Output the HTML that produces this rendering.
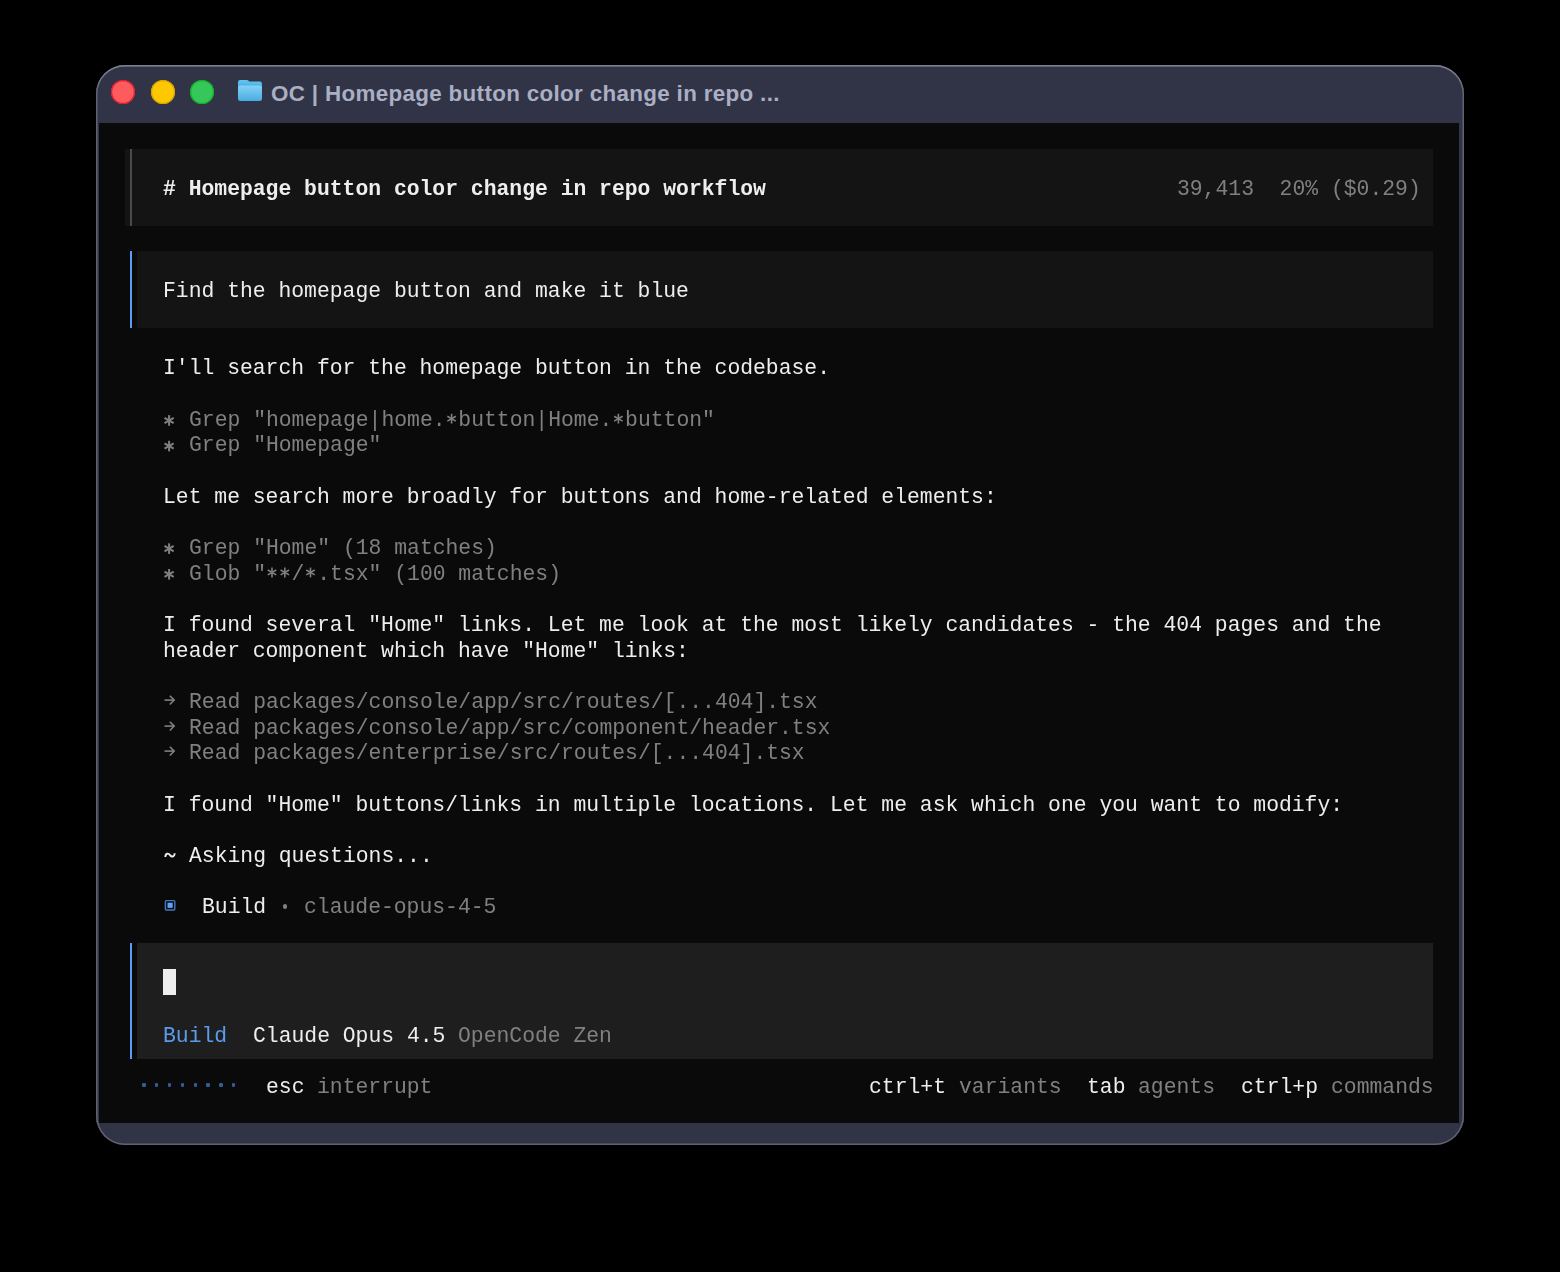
<!DOCTYPE html>
<html><head><meta charset="utf-8">
<style>
html,body{margin:0;padding:0;background:#000;width:1560px;height:1272px;overflow:hidden;}
.a{position:absolute;}
.win{position:absolute;left:96px;top:65px;width:1368px;height:1080px;background:#313447;border-radius:29px;box-shadow:inset 0 1.5px 0 #7a7d8a,inset 0 0 0 1.5px #5f6273;}
.content{position:absolute;left:99px;top:123px;width:1360px;height:1000px;background:#0a0a0a;}
.t{position:absolute;font-family:"Liberation Mono",monospace;font-size:21.38px;line-height:25.64px;height:25.64px;white-space:pre;will-change:transform;}
.title{position:absolute;left:271px;top:78px;font-family:"Liberation Sans",sans-serif;font-weight:bold;font-size:22.4px;letter-spacing:0.33px;line-height:32px;color:#abafc3;white-space:pre;}
.dot{position:absolute;width:24px;height:24px;border-radius:50%;}
svg{position:absolute;overflow:visible;}
</style></head><body>

<div class="win"></div>
<div class="dot" style="left:111px;top:80.3px;background:#fd5b5e;box-shadow:inset 0 0 0 1.2px #e3182f;"></div>
<div class="dot" style="left:150.5px;top:80.3px;background:#fdc800;box-shadow:inset 0 0 0 1.2px #dca300;"></div>
<div class="dot" style="left:190px;top:80.3px;background:#35c759;box-shadow:inset 0 0 0 1.2px #12b026;"></div>
<svg style="left:237px;top:79px" width="26" height="23" viewBox="0 0 26 23">
<defs><linearGradient id="fb" x1="0" y1="0" x2="0" y2="1"><stop offset="0" stop-color="#66c6f4"/><stop offset="1" stop-color="#349fd8"/></linearGradient>
<linearGradient id="ff" x1="0" y1="0" x2="0" y2="1"><stop offset="0" stop-color="#84d2f8"/><stop offset="1" stop-color="#4aabe0"/></linearGradient></defs>
<path d="M1 3.2 Q1 1 3.2 1 L9.8 1 Q10.9 1 11.6 1.8 L12.3 2.6 L22.8 2.6 Q25 2.6 25 4.8 L25 12 L1 12 Z" fill="url(#fb)"/>
<path d="M1 8.6 Q1 6.4 3.2 6.4 L22.8 6.4 Q25 6.4 25 8.6 L25 19.8 Q25 22 22.8 22 L3.2 22 Q1 22 1 19.8 Z" fill="url(#ff)"/>
</svg>
<div class="title">OC | Homepage button color change in repo ...</div>
<div class="content"></div>
<div class="a" style="left:124.66px;top:148.64px;width:1308.66px;height:76.92px;background:#141414;"></div>
<div class="a" style="left:130.00px;top:148.64px;width:2.00px;height:76.92px;background:#4b4b4b;"></div>
<div class="a" style="left:137.49px;top:251.20px;width:1295.83px;height:76.92px;background:#141414;"></div>
<div class="a" style="left:130.00px;top:251.20px;width:2.00px;height:76.92px;background:#5c9cf5;"></div>
<div class="a" style="left:137.49px;top:943.48px;width:1295.83px;height:115.38px;background:#1e1e1e;"></div>
<div class="a" style="left:130.00px;top:943.48px;width:2.00px;height:115.38px;background:#5c9cf5;"></div>
<div class="a" style="left:163.15px;top:969.12px;width:13.00px;height:26.00px;background:#eeeeee;"></div>
<svg style="left:0;top:0" width="1" height="1"><rect x="165.4" y="900.6" width="9.4" height="9.4" rx="1" fill="none" stroke="#4479c2" stroke-width="1.4"/><rect x="167.5" y="902.7" width="5.2" height="5.2" fill="#5ea3f7"/></svg>
<div class="a" style="left:283.10px;top:904.40px;width:4.20px;height:4.20px;background:#808080;border-radius:50%"></div>
<div class="a" style="left:142.19px;top:1083.28px;width:3.40px;height:3.40px;background:#325e96;border-radius:1.2px"></div>
<div class="a" style="left:155.02px;top:1083.28px;width:3.40px;height:3.40px;background:#325e96;border-radius:1.2px"></div>
<div class="a" style="left:167.85px;top:1083.28px;width:3.40px;height:3.40px;background:#325e96;border-radius:1.2px"></div>
<div class="a" style="left:180.68px;top:1083.28px;width:3.40px;height:3.40px;background:#325e96;border-radius:1.2px"></div>
<div class="a" style="left:193.51px;top:1083.28px;width:3.40px;height:3.40px;background:#325e96;border-radius:1.2px"></div>
<div class="a" style="left:206.34px;top:1083.28px;width:3.40px;height:3.40px;background:#325e96;border-radius:1.2px"></div>
<div class="a" style="left:219.17px;top:1083.28px;width:3.40px;height:3.40px;background:#325e96;border-radius:1.2px"></div>
<div class="a" style="left:232.00px;top:1083.28px;width:3.40px;height:3.40px;background:#325e96;border-radius:1.2px"></div>
<svg style="left:0;top:0" width="1" height="1"><g stroke="#808080" stroke-width="2.00"><line x1="169.10" y1="415.14" x2="169.10" y2="425.74"/><line x1="164.51" y1="417.79" x2="173.69" y2="423.09"/><line x1="164.51" y1="423.09" x2="173.69" y2="417.79"/></g></svg>
<svg style="left:0;top:0" width="1" height="1"><g stroke="#808080" stroke-width="2.00"><line x1="169.10" y1="440.78" x2="169.10" y2="451.38"/><line x1="164.51" y1="443.43" x2="173.69" y2="448.73"/><line x1="164.51" y1="448.73" x2="173.69" y2="443.43"/></g></svg>
<svg style="left:0;top:0" width="1" height="1"><g stroke="#808080" stroke-width="2.00"><line x1="169.10" y1="543.34" x2="169.10" y2="553.94"/><line x1="164.51" y1="545.99" x2="173.69" y2="551.29"/><line x1="164.51" y1="551.29" x2="173.69" y2="545.99"/></g></svg>
<svg style="left:0;top:0" width="1" height="1"><g stroke="#808080" stroke-width="2.00"><line x1="169.10" y1="568.98" x2="169.10" y2="579.58"/><line x1="164.51" y1="571.63" x2="173.69" y2="576.93"/><line x1="164.51" y1="576.93" x2="173.69" y2="571.63"/></g></svg>
<svg style="left:163.15px;top:687.08px" width="14" height="26"><g fill="none" stroke="#808080" stroke-width="1.6"><path d="M1.5 13.1 H11"/><path d="M6.8 8.7 L11.2 13.1 L6.8 17.5"/></g></svg>
<svg style="left:163.15px;top:712.72px" width="14" height="26"><g fill="none" stroke="#808080" stroke-width="1.6"><path d="M1.5 13.1 H11"/><path d="M6.8 8.7 L11.2 13.1 L6.8 17.5"/></g></svg>
<svg style="left:163.15px;top:738.36px" width="14" height="26"><g fill="none" stroke="#808080" stroke-width="1.6"><path d="M1.5 13.1 H11"/><path d="M6.8 8.7 L11.2 13.1 L6.8 17.5"/></g></svg>
<svg style="left:163.15px;top:840.92px" width="14" height="26"><path d="M2.3 16 C2.6 12.0 5.4 11.9 7 14.1 C8.6 16.3 11.4 16.2 11.7 12.3" fill="none" stroke="#eeeeee" stroke-width="1.9"/></svg>
<div class="t" style="left:163.15px;top:176.82px;color:#eeeeee;font-weight:bold;"># Homepage button color change in repo workflow</div>
<div class="t" style="left:1176.72px;top:176.82px;color:#808080;">39,413  20% ($0.29)</div>
<div class="t" style="left:163.15px;top:279.46px;color:#eeeeee;">Find the homepage button and make it blue</div>
<div class="t" style="left:163.15px;top:356.44px;color:#eeeeee;">I'll search for the homepage button in the codebase.</div>
<svg style="left:0;top:0" width="1" height="1"><g stroke="#808080" stroke-width="1.60"><line x1="451.61" y1="413.74" x2="451.61" y2="423.54"/><line x1="447.37" y1="416.19" x2="455.85" y2="421.09"/><line x1="447.37" y1="421.09" x2="455.85" y2="416.19"/></g></svg>
<svg style="left:0;top:0" width="1" height="1"><g stroke="#808080" stroke-width="1.60"><line x1="618.40" y1="413.74" x2="618.40" y2="423.54"/><line x1="614.16" y1="416.19" x2="622.64" y2="421.09"/><line x1="614.16" y1="421.09" x2="622.64" y2="416.19"/></g></svg>
<div class="t" style="left:188.81px;top:407.76px;color:#808080;">Grep "homepage|home. button|Home. button"</div>
<div class="t" style="left:188.81px;top:433.42px;color:#808080;">Grep "Homepage"</div>
<div class="t" style="left:163.15px;top:484.74px;color:#eeeeee;">Let me search more broadly for buttons and home-related elements:</div>
<div class="t" style="left:188.81px;top:536.06px;color:#808080;">Grep "Home" (18 matches)</div>
<svg style="left:0;top:0" width="1" height="1"><g stroke="#808080" stroke-width="1.60"><line x1="271.99" y1="567.58" x2="271.99" y2="577.38"/><line x1="267.75" y1="570.03" x2="276.23" y2="574.93"/><line x1="267.75" y1="574.93" x2="276.23" y2="570.03"/></g></svg>
<svg style="left:0;top:0" width="1" height="1"><g stroke="#808080" stroke-width="1.60"><line x1="284.82" y1="567.58" x2="284.82" y2="577.38"/><line x1="280.58" y1="570.03" x2="289.06" y2="574.93"/><line x1="280.58" y1="574.93" x2="289.06" y2="570.03"/></g></svg>
<svg style="left:0;top:0" width="1" height="1"><g stroke="#808080" stroke-width="1.60"><line x1="310.48" y1="567.58" x2="310.48" y2="577.38"/><line x1="306.24" y1="570.03" x2="314.72" y2="574.93"/><line x1="306.24" y1="574.93" x2="314.72" y2="570.03"/></g></svg>
<div class="t" style="left:188.81px;top:561.72px;color:#808080;">Glob "  / .tsx" (100 matches)</div>
<div class="t" style="left:163.15px;top:613.04px;color:#eeeeee;">I found several "Home" links. Let me look at the most likely candidates - the 404 pages and the</div>
<div class="t" style="left:163.15px;top:638.70px;color:#eeeeee;">header component which have "Home" links:</div>
<div class="t" style="left:188.81px;top:690.02px;color:#808080;">Read packages/console/app/src/routes/[...404].tsx</div>
<div class="t" style="left:188.81px;top:715.68px;color:#808080;">Read packages/console/app/src/component/header.tsx</div>
<div class="t" style="left:188.81px;top:741.34px;color:#808080;">Read packages/enterprise/src/routes/[...404].tsx</div>
<div class="t" style="left:163.15px;top:792.66px;color:#eeeeee;">I found "Home" buttons/links in multiple locations. Let me ask which one you want to modify:</div>
<div class="t" style="left:188.81px;top:843.98px;color:#eeeeee;">Asking questions...</div>
<div class="t" style="left:201.64px;top:895.30px;color:#eeeeee;">Build</div>
<div class="t" style="left:304.28px;top:895.30px;color:#808080;">claude-opus-4-5</div>
<div class="t" style="left:163.15px;top:1023.60px;color:#5b9bec;">Build</div>
<div class="t" style="left:252.96px;top:1023.60px;color:#eeeeee;">Claude Opus 4.5</div>
<div class="t" style="left:458.24px;top:1023.60px;color:#808080;">OpenCode Zen</div>
<div class="t" style="left:265.79px;top:1074.92px;color:#eeeeee;">esc</div>
<div class="t" style="left:317.11px;top:1074.92px;color:#808080;">interrupt</div>
<div class="t" style="left:868.80px;top:1074.92px;color:#eeeeee;">ctrl+t</div>
<div class="t" style="left:958.61px;top:1074.92px;color:#808080;">variants</div>
<div class="t" style="left:1086.91px;top:1074.92px;color:#eeeeee;">tab</div>
<div class="t" style="left:1138.23px;top:1074.92px;color:#808080;">agents</div>
<div class="t" style="left:1240.87px;top:1074.92px;color:#eeeeee;">ctrl+p</div>
<div class="t" style="left:1330.68px;top:1074.92px;color:#808080;">commands</div>
</body></html>
